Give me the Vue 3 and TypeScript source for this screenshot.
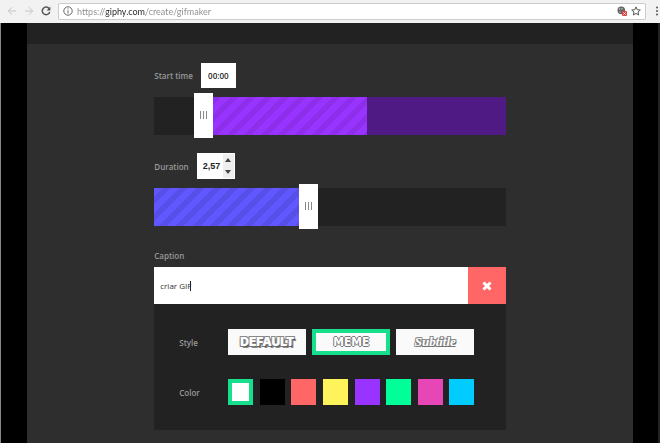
<script setup lang="ts">
import { computed, ref } from 'vue'

interface CaptionStyle {
  id: string
  label: string
}
interface Swatch {
  name: string
  value: string
}

const address = ref('https://giphy.com/create/gifmaker')
const startTime = ref('00:00')
const startPosition = ref(119)
const duration = ref('2,57')
const durationPosition = ref(436)
const caption = ref('criar GIF')
const activeStyle = ref('meme')
const activeColor = ref('white')

const captionStyles: CaptionStyle[] = [
  { id: 'default', label: 'DEFAULT' },
  { id: 'meme', label: 'MEME' },
  { id: 'subtitle', label: 'Subtitle' },
]

const swatches: Swatch[] = [
  { name: 'white', value: '#ffffff' },
  { name: 'black', value: '#000000' },
  { name: 'red', value: '#ff6666' },
  { name: 'yellow', value: '#fff35c' },
  { name: 'purple', value: '#9933ff' },
  { name: 'green', value: '#00ff99' },
  { name: 'pink', value: '#e646b6' },
  { name: 'blue', value: '#00ccff' },
]

const startVars = computed(() => ({
  '--from': `${startPosition.value / 10 + 2}%`,
  '--to': `${Math.min(100, startPosition.value / 10 + 48.6)}%`,
}))
const durationVars = computed(() => ({ '--to': `${durationPosition.value / 10}%` }))

function step(amount: number): void {
  const next = Math.max(0, parseFloat(duration.value.replace(',', '.')) + amount)
  duration.value = next.toFixed(2).replace('.', ',')
}
</script>

<template>
  <div class="browser">
    <header class="toolbar">
      <nav class="nav">
        <button type="button" class="icon faded" aria-label="Back">
          <svg viewBox="0 0 10 10"><path d="M9 5H1.5M5 1.3L1.3 5L5 8.7" /></svg>
        </button>
        <button type="button" class="icon faded" aria-label="Forward">
          <svg viewBox="0 0 10 10"><path d="M1 5H8.5M5 1.3L8.7 5L5 8.7" /></svg>
        </button>
        <button type="button" class="icon reload" aria-label="Reload">
          <svg viewBox="0 0 10 10">
            <path d="M8.1 2.6A3.8 3.8 0 1 0 8.7 6" />
            <path class="solid" d="M9.4 .6V4.4H5.6Z" />
          </svg>
        </button>
      </nav>
      <div class="omnibox">
        <svg class="info" viewBox="0 0 10 10">
          <circle cx="5" cy="5" r="4.2" />
          <path d="M5 4.4V7.5M5 2.4V3.5" />
        </svg>
        <input v-model="address" class="address" type="text" aria-label="Address" spellcheck="false" />
        <button type="button" class="icon" aria-label="Blocked content">
          <svg viewBox="0 0 10 10">
            <circle class="cookie" cx="4.3" cy="4.4" r="3.8" />
            <path class="crumb" d="M2 3H3.4M5 2V3.4M2.4 6H3.6" />
            <rect class="alert" x="5" y="5" width="5" height="5" rx="1" />
            <path class="cross" d="M6.3 6.3L8.7 8.7M8.7 6.3L6.3 8.7" />
          </svg>
        </button>
        <button type="button" class="icon star" aria-label="Bookmark">
          <svg viewBox="0 0 10 10">
            <path d="M5 .9L6.2 3.7L9.3 4L7 6L7.7 9L5 7.4L2.3 9L3 6L.7 4L3.8 3.7Z" />
          </svg>
        </button>
      </div>
      <button type="button" class="icon menu" aria-label="Menu">
        <svg viewBox="0 0 10 10">
          <circle cx="7" cy="1.5" r="1" />
          <circle cx="7" cy="5" r="1" />
          <circle cx="7" cy="8.5" r="1" />
        </svg>
      </button>
    </header>

    <main class="viewport">
      <div class="stage">
        <div class="strip"></div>
        <form class="maker" @submit.prevent>
          <section class="group">
            <div class="row">
              <label for="start">Start time</label>
              <input id="start" v-model="startTime" class="value" type="text" />
            </div>
            <input
              v-model.number="startPosition"
              class="slider start"
              :style="startVars"
              type="range"
              min="0"
              max="1000"
              aria-label="Start time position"
            />
          </section>

          <section class="group">
            <div class="row">
              <label for="duration">Duration</label>
              <div class="stepper">
                <input id="duration" v-model="duration" type="text" inputmode="decimal" />
                <div class="spin">
                  <button type="button" aria-label="Increase" @click="step(0.1)">
                    <svg viewBox="0 0 6 4"><path d="M0 4L3 0L6 4Z" /></svg>
                  </button>
                  <button type="button" aria-label="Decrease" @click="step(-0.1)">
                    <svg viewBox="0 0 6 4"><path d="M0 0L3 4L6 0Z" /></svg>
                  </button>
                </div>
              </div>
            </div>
            <input
              v-model.number="durationPosition"
              class="slider length"
              :style="durationVars"
              type="range"
              min="0"
              max="1000"
              aria-label="Duration position"
            />
          </section>

          <section class="caption">
            <label for="caption">Caption</label>
            <div class="caption-field">
              <input id="caption" v-model="caption" type="text" />
              <span class="caret"></span>
              <button type="button" aria-label="Clear caption" @click="caption = ''">
                <svg viewBox="0 0 10 10"><path d="M1.5 1.5L8.5 8.5M8.5 1.5L1.5 8.5" /></svg>
              </button>
            </div>
            <div class="options">
              <span class="name">Style</span>
              <div class="choices">
                <button
                  v-for="item in captionStyles"
                  :key="item.id"
                  type="button"
                  :class="['style', item.id, { active: activeStyle === item.id }]"
                  :aria-pressed="activeStyle === item.id"
                  @click="activeStyle = item.id"
                >
                  {{ item.label }}
                </button>
              </div>
              <span class="name">Color</span>
              <div class="choices">
                <button
                  v-for="item in swatches"
                  :key="item.name"
                  type="button"
                  :class="['swatch', { active: activeColor === item.name }]"
                  :style="{ backgroundColor: item.value }"
                  :aria-label="item.name"
                  :aria-pressed="activeColor === item.name"
                  @click="activeColor = item.name"
                ></button>
              </div>
            </div>
          </section>
        </form>
      </div>
    </main>
  </div>
</template>

<style>
body {
  margin: 0;
  background: #000;
}
</style>

<style scoped>
.browser,
.browser * {
  box-sizing: border-box;
}
.browser {
  display: flex;
  flex-direction: column;
  min-height: 100vh;
  font-family: 'Open Sans', 'Noto Sans', sans-serif;
  font-size: 8px;
  overflow: hidden;
}
button,
input {
  margin: 0;
  padding: 0;
  border: 0;
  border-radius: 0;
  outline: 0;
  font: inherit;
}
svg {
  display: block;
}
.toolbar {
  display: flex;
  align-items: center;
  height: 23px;
  padding: 0 0 1px 7px;
  background: #f2f2f2;
}
.nav {
  display: flex;
  gap: 7px;
  width: 51px;
}
.icon {
  width: 10px;
  height: 10px;
  flex: none;
  background: none;
}
.icon svg {
  width: 10px;
  height: 10px;
  fill: none;
  stroke: #555;
  stroke-width: 1;
}
.icon.faded svg {
  stroke: #c4c4c4;
}
.icon.reload svg {
  stroke-width: 1.5;
}
.icon .solid {
  fill: #555;
  stroke: none;
}
.icon .cookie {
  fill: #666;
  stroke: none;
}
.icon .crumb {
  stroke: #ddd;
}
.icon .alert {
  fill: #d44;
  stroke: none;
}
.icon .cross {
  stroke: #fff;
  stroke-width: 0.8;
}
.icon.menu {
  margin-left: 4px;
}
.icon.menu svg {
  fill: #555;
  stroke: none;
}
.omnibox {
  display: flex;
  flex: 1;
  align-items: center;
  gap: 4px;
  height: 17px;
  padding: 0 4px;
  border: 1px solid #ccc;
  border-radius: 2px;
  background: #fff;
}
.info {
  width: 10px;
  height: 10px;
  fill: none;
  stroke: #666;
  stroke-width: 1;
}
.address {
  flex: 1;
  min-width: 0;
  height: 14px;
  background: linear-gradient(90deg, #8c8c8c 29px, #222 29px, #222 69px, #8c8c8c 69px);
  background-clip: text;
  color: transparent;
  font-family: Lato, sans-serif;
  font-size: 9px;
}
.viewport {
  display: flex;
  flex: 1;
  padding: 0 25px 0 26px;
  border-right: 2px solid #222;
  border-left: 1px solid #888;
  background: #000;
}
.stage {
  flex: 1;
  background: #2e2e2e;
}
.strip {
  height: 21px;
  background: #222;
}
.maker {
  width: 58%;
  margin: 0 auto;
  padding: 18px 0 13px;
  color: #999;
  font-weight: 600;
}
.group {
  margin-bottom: 15px;
}
.row {
  display: flex;
  align-items: center;
  gap: 8px;
  height: 26px;
  margin-bottom: 5px;
}
.value {
  width: 35px;
  height: 25px;
  background: #fff;
  color: #222;
  text-align: center;
}
.stepper {
  display: flex;
  width: 38px;
  height: 26px;
  background: #fff;
}
.stepper input {
  flex: 1;
  min-width: 0;
  padding-left: 6px;
  background: none;
  color: #222;
  font-family: 'Liberation Sans', sans-serif;
  font-size: 9px;
}
.spin {
  display: flex;
  flex-direction: column;
  width: 12px;
  padding: 1px 1px 1px 0;
}
.spin button {
  display: flex;
  flex: 1;
  align-items: center;
  justify-content: center;
  background: #eee;
}
.spin svg {
  width: 6px;
  height: 4px;
  fill: #444;
}
.slider {
  display: block;
  width: 100%;
  height: 45px;
  appearance: none;
  background: none;
}
.slider::-webkit-slider-runnable-track {
  height: 38px;
}
.slider.start::-webkit-slider-runnable-track {
  background:
    linear-gradient(90deg, #222 var(--from), transparent var(--from), transparent var(--to), #4f1a83 var(--to)),
    repeating-linear-gradient(135deg, #9933ff 0 6px, #8c2eea 6px 12px);
}
.slider.length::-webkit-slider-runnable-track {
  background:
    linear-gradient(90deg, transparent var(--to), #222 var(--to)),
    repeating-linear-gradient(135deg, #6157ff 0 6px, #584fe9 6px 12px);
}
.slider::-webkit-slider-thumb {
  width: 19px;
  height: 45px;
  margin-top: -4px;
  appearance: none;
  background:
    linear-gradient(#888, #888) 6px 50% / 1px 8px no-repeat,
    linear-gradient(#888, #888) 9px 50% / 1px 8px no-repeat,
    linear-gradient(#888, #888) 12px 50% / 1px 8px no-repeat,
    #fff;
}
.caption {
  display: flex;
  flex-direction: column;
  padding-top: 6px;
}
.caption label {
  height: 17px;
  line-height: 12px;
}
.caption-field {
  position: relative;
  display: flex;
  height: 37px;
  background: #fff;
}
.caption-field input {
  flex: 1;
  min-width: 0;
  padding-left: 6px;
  background: none;
  color: #333;
  font-weight: 400;
}
.caret {
  position: absolute;
  top: 14px;
  left: 36px;
  width: 1px;
  height: 10px;
  background: #222;
}
.caption-field button {
  display: flex;
  align-items: center;
  justify-content: center;
  width: 38px;
  background: #ff6666;
}
.caption-field svg {
  width: 10px;
  height: 10px;
  fill: none;
  stroke: #fff;
  stroke-width: 3;
}
.options {
  display: grid;
  grid-template-columns: 49px minmax(0, 246px);
  row-gap: 24px;
  align-items: center;
  padding: 25px;
  background: #222;
}
.choices {
  display: flex;
  justify-content: space-between;
}
.style {
  width: 78px;
  height: 26px;
  background: #fafafa;
  color: #fff;
  line-height: 16px;
}
.style.default {
  font-family: Inter, sans-serif;
  font-size: 12px;
  font-weight: 900;
  text-shadow: -1px -1px #888, 1px -1px #888, -1px 1px #777, 1px 1px #555, 2px 2px #888;
}
.style.meme {
  font-family: 'DejaVu Sans Condensed', 'DejaVu Sans', sans-serif;
  font-size: 12px;
  font-stretch: condensed;
  font-weight: 700;
  color: #fff;
  text-shadow: -1px 0 #777, 1px 0 #777, 0 -1px #777, 0 1px #777;
}
.style.subtitle {
  font-family: 'Liberation Serif', serif;
  font-size: 13px;
  font-style: italic;
  font-weight: 700;
  text-shadow: -1px -1px #888, 1px -1px #888, -1px 1px #777, 1px 1px #555;
}
.swatch {
  width: 25px;
  height: 26px;
}
.style.active,
.swatch.active {
  border: 4px solid #16e08d;
}
</style>
